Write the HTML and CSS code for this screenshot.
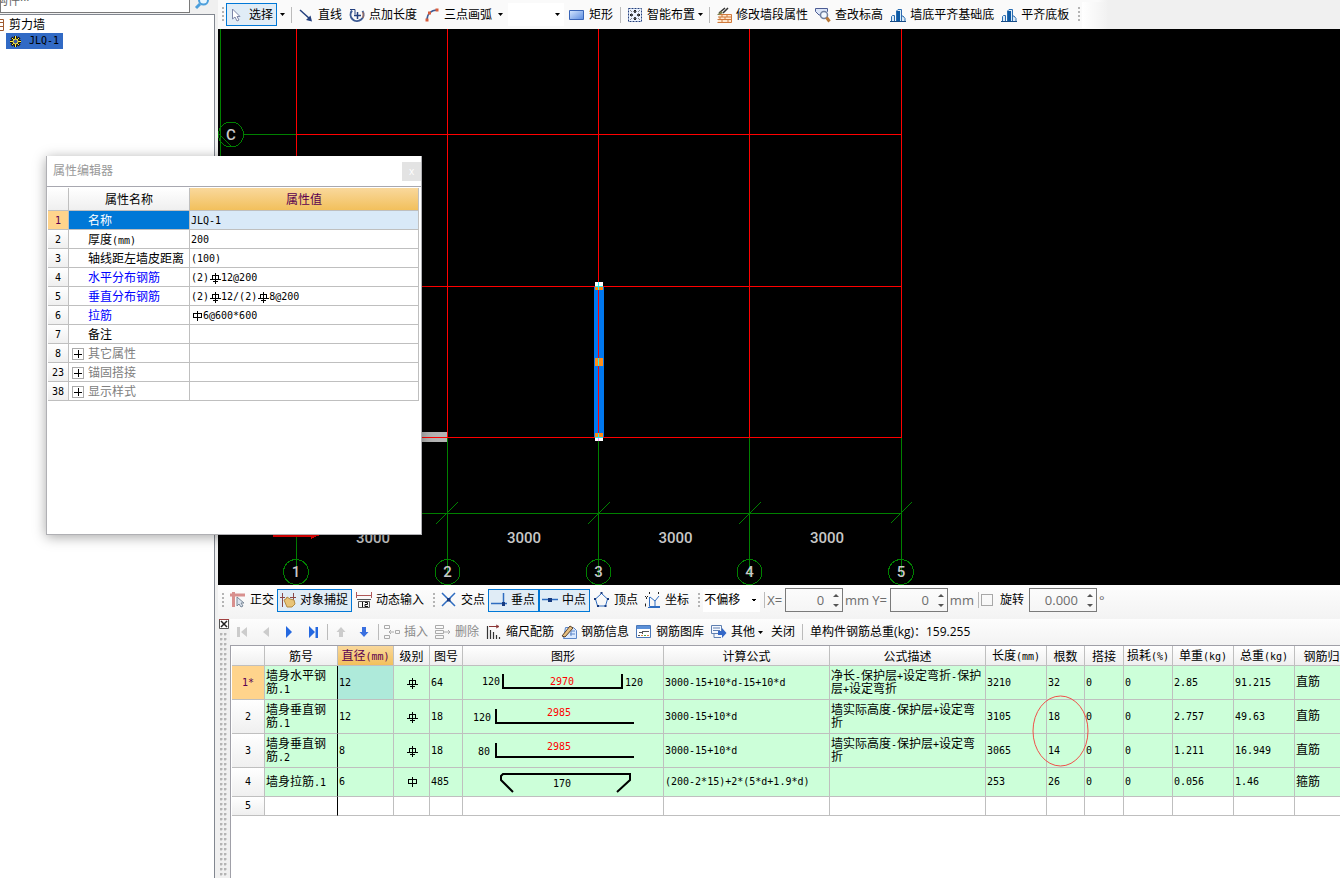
FILE: index.html
```html
<!DOCTYPE html>
<html lang="zh-CN">
<head>
<meta charset="utf-8">
<title>剪力墙</title>
<link rel="stylesheet" href="styles.css">
</head>
<body>
<svg width="0" height="0" class="defs" aria-hidden="true">
  <symbol id="rebar3" viewBox="0 0 12 12"><path d="M3.500 7.500v-4h6v4M1 7.500h11M4 9.500h5M6.500 1v11" fill="none" stroke="currentColor" shape-rendering="crispEdges"/></symbol>
  <symbol id="rebar1" viewBox="0 0 12 12"><path d="M2.500 3.500h8v4h-8zM6.500 1v10" fill="none" stroke="currentColor" shape-rendering="crispEdges"/></symbol>
  <symbol id="caret" viewBox="0 0 5 3"><path d="M0 0h5L2.500 3z" fill="currentColor"/></symbol>
  <symbol id="align" viewBox="0 0 16 16"><path d="M1.500 14.500v-5l1-1h2v6M6.500 14.500V4l1.500-1.500h3.500v12M11.500 9h1.500l2 2.500v3h-3.500z" fill="#dcebf8" stroke="#2a6db0"/><path d="M7 4h3v10H7z" fill="#0c5aa6"/><path d="M0 14.500h16" stroke="#174b86"/></symbol>
</svg>
<div class="app">
  <aside class="side">
    <div class="search">
      <input class="search-box" type="text" value="构件···" aria-label="搜索构件">
      <button class="search-btn" aria-label="搜索"><svg width="16" height="16" viewBox="0 0 16 16"><circle cx="9.500" cy="6" r="4.500" fill="#e8f6ff" stroke="#4d9fdc" stroke-width="2"/><path d="M6 10l-4 4" stroke="#4d9fdc" stroke-width="3"/></svg></button>
    </div>
    <ul class="tree">
      <li class="root"><svg width="5" height="14" viewBox="0 0 5 14"><path d="M0 1.500h3.500v11H0M0 4.500h3M0 8.500h3" stroke="#a05a30" fill="none"/></svg>剪力墙</li>
      <li class="leaf"><svg width="13" height="13" viewBox="0 0 13 13"><path d="M6.500 1v11M1 6.500h11M2.500 2.500l8 8M10.500 2.500l-8 8" stroke="#181818" stroke-width="3"/><path d="M6.500 1v11M1 6.500h11M3 3l7 7M10 3l-7 7" stroke="#ffee38"/><circle cx="6.500" cy="6.500" r="2.500" fill="#3a5aa0" stroke="#ffee38"/></svg><span class="m">JLQ-1</span></li>
    </ul>
  </aside>

  <main class="main">
    <div class="bar top">
      <span class="grip"></span>
      <button class="tool on"><svg width="16" height="16" viewBox="0 0 16 16"><path d="M3.500 2v10l2.500-2 2 4 2-1-2-3.500h3z" fill="#fff" stroke="#7d86a8"/></svg>选择</button>
      <button class="drop" aria-label="更多"><svg width="5" height="3"><use href="#caret"/></svg></button>
      <span class="sep"></span>
      <button class="tool"><svg width="16" height="16" viewBox="0 0 16 16"><path d="M2 3l10 9" stroke="#24407e" stroke-width="1.500"/><path d="M14 14.500l-6-1.500 4.500-4.500z" fill="#24407e"/></svg>直线</button>
      <button class="tool"><svg width="16" height="16" viewBox="0 0 16 16" fill="none"><path d="M3 3.500A6.500 6.500 0 1 0 13.500 4" stroke="#3d5b94" stroke-width="2"/><path d="M1 2.500h5v5" stroke="#24407e"/><path d="M5 8.500h7M8.500 5v7" stroke="#24407e" stroke-width="1.500"/><path d="M14 5v6" stroke="#c77b50"/></svg>点加长度</button>
      <button class="tool"><svg width="16" height="16" viewBox="0 0 16 16"><path d="M3 13C3 7 7 3 13 3" fill="none" stroke="#3d5b94" stroke-width="1.500"/><path d="M1.500 11.500h3v3h-3zM4 4.500h3v3H4zM11.500 1.500h3v3h-3z" fill="#d85c3c"/></svg>三点画弧</button>
      <button class="drop" aria-label="更多画弧方式"><svg width="5" height="3"><use href="#caret"/></svg></button>
      <button class="blank-combo" aria-label="选项"><svg width="5" height="3"><use href="#caret"/></svg></button>
      <button class="tool"><svg width="16" height="16" viewBox="0 0 16 16"><defs><linearGradient id="rg" x2="1" y2="1"><stop stop-color="#d6e8ff"/><stop offset="1" stop-color="#5a8be0"/></linearGradient></defs><path d="M.5 3.500h14v9H.5z" fill="url(#rg)" stroke="#3a66b8"/></svg>矩形</button>
      <span class="sep"></span>
      <button class="tool"><svg width="16" height="16" viewBox="0 0 16 16"><path d="M1.500 1.500h13v13h-13z" fill="#edf4ff" stroke="#24407e" stroke-dasharray="2 1"/><path d="M8 3v3M8 10v3M3 8h3M10 8h3" stroke="#111" stroke-width="1.500"/><path d="M6.500 4.500L8 3l1.500 1.500M6.500 11.500L8 13l1.500-1.500M4.500 6.500L3 8l1.500 1.500M11.500 6.500L13 8l-1.500 1.500M3.500 3.500l1 1M12.500 3.500l-1 1M3.500 12.500l1-1M12.500 12.500l-1-1" stroke="#222" fill="none"/></svg>智能布置</button>
      <button class="drop tight" aria-label="更多布置方式"><svg width="5" height="3"><use href="#caret"/></svg></button>
      <span class="sep"></span>
      <button class="tool"><svg width="16" height="16" viewBox="0 0 16 16"><path d="M3.500 7.500h12v8h-14z" fill="#ffe6cc"/><path d="M3 7.500h12.500v8H1.500M2 10h13M1.500 12.500H15M6 7.500V10M11 7.500V10M4 10v2.500M9 10v2.500M6 12.500v3M12 12.500v3" stroke="#d07a3c" fill="none"/><path d="M12 1L7 6M9 1L3 6" stroke="#333" stroke-width="1.500"/><path d="M1 8l4-4 2 2-4 2z" fill="#7a8050"/></svg>修改墙段属性</button>
      <button class="tool"><svg width="16" height="16" viewBox="0 0 16 16"><path d="M.5 1.500h12v3L9 8H4L.5 4.500z" fill="#dce6f8" stroke="#4c5c94"/><circle cx="9" cy="8" r="3.500" fill="#f2f8ff" stroke="#7080a0" stroke-width="1.500"/><path d="M11.500 10.500l3 4" stroke="#b87838" stroke-width="3"/></svg>查改标高</button>
      <button class="tool"><svg width="16" height="16"><use href="#align"/></svg>墙底平齐基础底</button>
      <button class="tool"><svg width="16" height="16"><use href="#align"/></svg>平齐底板</button>
      <span class="grip far"></span>
      <span class="tail"></span>
    </div>

    <div class="canvas">
      <svg class="drawing" viewBox="218 29 1122 556" width="1122" height="556" role="img" aria-label="轴网">
        <g class="green" fill="none">
          <path d="M220.500 29V500M244 134.500H296M422 513.500H901M296.500 437V576M447.500 437V576M598.500 437V576M749.500 437V576M901.500 437V576"/>
          <path d="M436 524l22-22M588 524l22-22M739 524l22-22M891 523l21-21M219 134l12 12"/>
          <circle cx="231" cy="134.500" r="12.500"/><circle cx="296" cy="572" r="12.500"/><circle cx="447.500" cy="572" r="12.500"/><circle cx="598.500" cy="572" r="12.500"/><circle cx="749.500" cy="572" r="12.500"/><circle cx="901" cy="572" r="12.500"/>
        </g>
        <path d="M422 432h25v10h-25z" fill="#b4b4b4"/>
        <path d="M594 286h10v152h-10z" fill="#0078f0"/>
        <path class="red" d="M296.500 29V437M447.500 29V437M598.500 29V437M749.500 29V437M901.500 29V437M296 134.500H902M296 286.500H902M296 437.500H902"/>
        <path d="M595 282h8v5h-8zM595 437h8v4h-8z" fill="#fff"/>
        <path d="M595 287h8v3h-8zM595 358h8v8h-8zM595 433h8v4h-8z" fill="#ff8c18"/>
        <path d="M598.500 282v8M598.500 358v8M598.500 433v5M595 286.500h8M595 437.500h8" stroke="#20f0f0"/>
        <path d="M598.500 438v3" stroke="#ff80ff"/>
        <path d="M273 534h49l-11 5v-2h-38z" fill="#f00"/>
        <g class="label">
          <text x="373" y="543">3000</text><text x="524" y="543">3000</text><text x="675.500" y="543">3000</text><text x="827" y="543">3000</text>
          <text x="231" y="140">C</text><text x="296" y="577">1</text><text x="447.500" y="577">2</text><text x="598.500" y="577">3</text><text x="749.500" y="577">4</text><text x="901" y="577">5</text>
        </g>
      </svg>
    </div>

    <div class="bar snap">
      <span class="grip"></span>
      <button class="tool"><svg width="16" height="16" viewBox="0 0 16 16"><path d="M0 3h15M3.500 0v15" stroke="#d8908e" stroke-width="3"/><path d="M7 5v9l2-2 2 3 2-1-2-3h3z" fill="#dbe3ee" stroke="#7a8898"/></svg>正交</button>
      <button class="tool on"><svg width="16" height="16" viewBox="0 0 16 16"><path d="M2.500 1v14M13.500 1v8M0 5.500h5M10 5.500h6" stroke="#8a4848"/><path d="M4 8l2-1 1-2 3 2 4 1 1 4-3 3H7z" fill="#e8c478" stroke="#b48a42"/></svg>对象捕捉</button>
      <button class="tool"><svg width="16" height="16" viewBox="0 0 16 16" fill="none"><path d="M.5 0v6M15.500 0v6M0 3.500h16" stroke="#b05858"/><path d="M1 7.500h14M2.500 9.500h11v6h-11z" stroke="#555"/><path d="M6.500 10v5M9 10.500h2.500v2H9v2h3" stroke="#111"/></svg>动态输入</button>
      <span class="grip mid"></span>
      <button class="tool"><svg width="16" height="16" viewBox="0 0 16 16"><path d="M1 1l13 13M14 1L1 14" stroke="#2e6cc0" stroke-width="1.500"/><path d="M6 6h3.500v3.500H6z" fill="#173a80"/></svg>交点</button>
      <button class="tool on"><svg width="16" height="16" viewBox="0 0 16 16"><path d="M12.500 1v11M0 11.500h16" stroke="#2e6cc0" stroke-width="1.500"/><path d="M11 10h3v4h-3z" fill="#173a80"/></svg>垂点</button>
      <button class="tool on"><svg width="16" height="16" viewBox="0 0 16 16"><path d="M0 7.500h16" stroke="#2e6cc0" stroke-width="1.500"/><path d="M6 6h4v4H6z" fill="#173a80"/></svg>中点</button>
      <button class="tool"><svg width="16" height="16" viewBox="0 0 16 16"><path d="M7.500 1.500L13.500 7 11.500 14H3.500L1.500 7z" fill="none" stroke="#2e6cc0"/><path d="M6.500 0h2v2h-2zM0 6h2v2H0zM13 6h2v2h-2zM3 13h2v2H3zM10.500 13h2v2h-2z" fill="#173a80"/></svg>顶点</button>
      <button class="tool"><svg width="16" height="16" viewBox="0 0 16 16" fill="none"><path d="M4.500 5v9.500H15M3 15.500h12" stroke="#2e6cc0"/><path d="M5 5l5 4 4-5M10 9v5" stroke="#2e6cc0"/><path d="M4.500 0v2M13.500 0v2M0 4l1.500 1.500L3 4M1.500 5.500V7M.5 11.500v3" stroke="#222"/></svg>坐标</button>
      <span class="grip mid"></span>
      <select class="combo" aria-label="偏移方式"><option>不偏移</option></select>
      <span class="sep"></span>
      <label for="ox">X=</label><span class="spin"><input id="ox" type="text" value="0"><i class="arrows"></i></span><span class="unit">mm</span>
      <label for="oy" class="second">Y=</label><span class="spin"><input id="oy" type="text" value="0"><i class="arrows"></i></span><span class="unit">mm</span>
      <span class="sep"></span>
      <input class="check" type="checkbox" id="rot"><label for="rot" class="rotate">旋转</label>
      <span class="spin wide"><input type="text" value="0.000" aria-label="旋转角度"><i class="arrows"></i></span><span class="unit">°</span>
    </div>

    <section class="panel">
      <div class="dock"><button class="dock-close" aria-label="关闭面板"><svg width="10" height="10" viewBox="0 0 10 10"><path d="M.5.500h9v9h-9z" fill="#fff" stroke="#555"/><path d="M0 .500h10" stroke="#a04040"/><path d="M2 2l6 6M8 2L2 8" stroke="#222" stroke-width="1.500"/></svg></button></div>
      <div class="panel-body">
        <div class="bar rebar">
          <button class="nav" aria-label="第一条"><svg width="12" height="14" viewBox="0 0 12 14"><path d="M1 2h3v10H1zM11 2v10L5 7z" fill="#ccc"/></svg></button>
          <button class="nav" aria-label="上一条"><svg width="12" height="14" viewBox="0 0 12 14"><path d="M9 2v10L3 7z" fill="#ccc"/></svg></button>
          <button class="nav" aria-label="下一条"><svg width="12" height="14" viewBox="0 0 12 14"><path d="M2 1v12l6-6z" fill="#2468e0"/></svg></button>
          <button class="nav" aria-label="最后一条"><svg width="12" height="14" viewBox="0 0 12 14"><path d="M1 1v12l6-6zM7.500 2h2.500v11H7.500z" fill="#2468e0"/></svg></button>
          <span class="sep"></span>
          <button class="nav" aria-label="上移"><svg width="12" height="14" viewBox="0 0 12 14"><path d="M6 2l4.500 5H8v5H4V7H1.500z" fill="#ccc"/></svg></button>
          <button class="nav" aria-label="下移"><svg width="12" height="14" viewBox="0 0 12 14"><path d="M5 12L.5 7H3V2h4v5h2.500z" fill="#3a70e0"/></svg></button>
          <span class="sep"></span>
          <button class="tool off"><svg width="16" height="16" viewBox="0 0 16 16" fill="none"><path d="M.5 1.500h5v3h-5zM.5 11.500h5v3h-5zM11.500 6.500h4v3h-4zM10 8H5M7 6L5 8l2 2" stroke="#aaa"/></svg>插入</button>
          <button class="tool off"><svg width="16" height="16" viewBox="0 0 16 16" fill="none"><path d="M.5 1.500h8v3h-8zM.5 6.500h8v3h-8zM.5 11.500h8v3h-8zM9 8h6M13 6l2 2-2 2" stroke="#aaa"/></svg>删除</button>
          <button class="tool"><svg width="16" height="16" viewBox="0 0 16 16"><path d="M1.500 2v13M4.500 6v9M7.500 8v7M10.500 11v4M13.500 13v2" stroke="#333" stroke-width="1.200"/><path d="M3 2.500h9M10 1l3 1.500L10 4" stroke="#8a3535" fill="none"/></svg>缩尺配筋</button>
          <button class="tool"><svg width="16" height="16" viewBox="0 0 16 16"><path d="M4.500 3.500h8l3 3v8h-13z" fill="#dbeaff" stroke="#5c86c8"/><path d="M10 7h4M9 10h5M10 7v5" stroke="#5c86c8"/><path d="M1 12l8-10 3 2-8 9z" fill="#e8c080" stroke="#584028"/></svg>钢筋信息</button>
          <button class="tool"><svg width="16" height="16" viewBox="0 0 16 16"><path d="M.5 1.500h14v12H.5z" fill="#fff" stroke="#4a78b8"/><path d="M1 2h13v3H1z" fill="#5b90d8"/><path d="M3 8.500h3M6.500 7v3M7 7.500h6M2 11.500h2" stroke="#555"/><path d="M5 11.500h2M11 11.500h2" stroke="#d84"/><path d="M8 11.500h2" stroke="#4a4"/></svg>钢筋图库</button>
          <button class="tool"><svg width="16" height="16" viewBox="0 0 16 16"><path d="M.5 1.500h10v8H.5zM3 10v3.500h7" fill="#f4f8ff" stroke="#6080b0"/><path d="M2 4h7M2 6.500h7" stroke="#6080b0"/><path d="M7 7h4V4l4.500 5L11 14v-3H7z" fill="#3468c8"/></svg>其他</button>
          <button class="drop tight" aria-label="其他选项"><svg width="5" height="3"><use href="#caret"/></svg></button>
          <button class="tool bare">关闭</button>
          <span class="sep"></span>
          <span class="total">单构件钢筋总重(kg)：159.255</span>
        </div>
        <div class="grid-wrap">
          <table class="grid bars">
            <colgroup><col class="w33"><col class="w73"><col class="w56"><col class="w36"><col class="w33"><col class="w201"><col class="w166"><col class="w156"><col class="w61"><col class="w38"><col class="w39"><col class="w49"><col class="w61"><col class="w61"><col class="w66"></colgroup>
            <thead><tr><th></th><th class="frozen">筋号</th><th class="hot">直径<span class="m">(mm)</span></th><th>级别</th><th>图号</th><th>图形</th><th>计算公式</th><th>公式描述</th><th>长度<span class="m">(mm)</span></th><th>根数</th><th>搭接</th><th>损耗<span class="m">(%)</span></th><th>单重<span class="m">(kg)</span></th><th>总重<span class="m">(kg)</span></th><th>钢筋归类</th></tr></thead>
            <tbody class="m">
              <tr class="tall"><th class="hot-row">1*</th><td class="frozen"><b>墙身水平钢筋</b>.1</td><td class="cur">12</td><td class="mid"><svg width="12" height="12"><use href="#rebar3"/></svg></td><td>64</td>
                <td class="pic"><svg width="200" height="33"><path class="bar-line" d="M40 8v14h119V8"/><text x="19" y="19">120</text><text class="dim" x="87" y="19">2970</text><text x="162" y="20">120</text></svg></td>
                <td>3000-15+10*d-15+10*d</td><td><b>净长</b>-<b>保护层</b>+<b>设定弯折</b>-<b>保护层</b>+<b>设定弯折</b></td><td>3210</td><td>32</td><td>0</td><td>0</td><td>2.85</td><td>91.215</td><td><b>直筋</b></td></tr>
              <tr class="tall"><th>2</th><td class="frozen"><b>墙身垂直钢筋</b>.1</td><td>12</td><td class="mid"><svg width="12" height="12"><use href="#rebar3"/></svg></td><td>18</td>
                <td class="pic"><svg width="200" height="33"><path class="bar-line" d="M33 9v14h138"/><text x="10" y="21">120</text><text class="dim" x="84" y="16">2985</text></svg></td>
                <td>3000-15+10*d</td><td><b>墙实际高度</b>-<b>保护层</b>+<b>设定弯折</b></td><td>3105</td><td>18</td><td>0</td><td>0</td><td>2.757</td><td>49.63</td><td><b>直筋</b></td></tr>
              <tr class="tall"><th>3</th><td class="frozen"><b>墙身垂直钢筋</b>.2</td><td>8</td><td class="mid"><svg width="12" height="12"><use href="#rebar3"/></svg></td><td>18</td>
                <td class="pic"><svg width="200" height="33"><path class="bar-line" d="M33 9v14h138"/><text x="15" y="21">80</text><text class="dim" x="84" y="16">2985</text></svg></td>
                <td>3000-15+10*d</td><td><b>墙实际高度</b>-<b>保护层</b>+<b>设定弯折</b></td><td>3065</td><td>14</td><td>0</td><td>0</td><td>1.211</td><td>16.949</td><td><b>直筋</b></td></tr>
              <tr class="medium"><th>4</th><td class="frozen"><b>墙身拉筋</b>.1</td><td>6</td><td class="mid"><svg width="12" height="12"><use href="#rebar1"/></svg></td><td>485</td>
                <td class="pic"><svg width="200" height="28"><path class="bar-line" d="M50 24L38 12v-4l2-2h127v6l-13 12"/><text x="90" y="19">170</text></svg></td>
                <td>(200-2*15)+2*(5*d+1.9*d)</td><td></td><td>253</td><td>26</td><td>0</td><td>0</td><td>0.056</td><td>1.46</td><td><b>箍筋</b></td></tr>
              <tr class="last"><th>5</th><td class="frozen"></td><td></td><td></td><td></td><td></td><td></td><td></td><td></td><td></td><td></td><td></td><td></td><td></td><td></td></tr>
            </tbody>
          </table>
          <svg class="mark" width="57" height="72" viewBox="0 0 57 72" aria-hidden="true"><ellipse cx="28.500" cy="36" rx="27.500" ry="35" fill="none" stroke="#f0504a"/></svg>
        </div>
      </div>
    </section>
  </main>

  <section class="dialog" role="dialog" aria-label="属性编辑器">
    <header class="dialog-head"><h1>属性编辑器</h1><button class="dialog-close" aria-label="关闭">x</button></header>
    <div class="dialog-body">
      <table class="grid props">
        <colgroup><col class="w21"><col class="w121"><col class="w229"></colgroup>
        <thead><tr><th></th><th>属性名称</th><th class="hot">属性值</th></tr></thead>
        <tbody>
          <tr class="sel"><th class="hot-row m">1</th><td>名称</td><td class="m">JLQ-1</td></tr>
          <tr><th class="m">2</th><td>厚度<span class="m">(mm)</span></td><td class="m">200</td></tr>
          <tr><th class="m">3</th><td>轴线距左墙皮距离</td><td class="m">(100)</td></tr>
          <tr class="blue"><th class="m">4</th><td>水平分布钢筋</td><td class="m">(2)<svg width="12" height="12"><use href="#rebar3"/></svg>12@200</td></tr>
          <tr class="blue"><th class="m">5</th><td>垂直分布钢筋</td><td class="m">(2)<svg width="12" height="12"><use href="#rebar3"/></svg>12/(2)<svg width="12" height="12"><use href="#rebar3"/></svg>8@200</td></tr>
          <tr class="blue"><th class="m">6</th><td>拉筋</td><td class="m"><svg width="12" height="12"><use href="#rebar1"/></svg>6@600*600</td></tr>
          <tr><th class="m">7</th><td>备注</td><td></td></tr>
          <tr class="group"><th class="m">8</th><td><button class="plus" aria-label="展开其它属性"></button>其它属性</td><td></td></tr>
          <tr class="group"><th class="m">23</th><td><button class="plus" aria-label="展开锚固搭接"></button>锚固搭接</td><td></td></tr>
          <tr class="group"><th class="m">38</th><td><button class="plus" aria-label="展开显示样式"></button>显示样式</td><td></td></tr>
        </tbody>
      </table>
    </div>
  </section>
</div>
</body>
</html>
```
FILE: styles.css
```css
* { box-sizing: border-box; }
body {
  margin: 0;
  font: 12px/16px "Open Sans", "Noto Sans CJK SC", sans-serif;
  color: #000;
  background: #f0f0f0;
}
button, input, select { font: inherit; color: inherit; margin: 0; padding: 0; border: 0; background: none; border-radius: 0; }
svg { flex: none; }
.defs { position: absolute; }
.m { font-family: "DejaVu Sans Mono", "Noto Sans CJK SC", monospace; font-size: 10px; }
b { font-weight: 400; font-size: 12px; line-height: 10px; font-family: "Noto Sans CJK SC", sans-serif; }

.app { display: flex; height: 100vh; overflow: hidden; position: relative; }

/* component tree */
.side { width: 218px; flex: none; display: flex; flex-direction: column; padding-right: 3px; }
.search { display: flex; height: 14px; }
.search-box { width: 190px; height: 27px; margin-top: -14px; border: 1px solid #7a7a7a; background: #fff; color: #666; text-indent: -5px; }
.search-btn { height: 14px; margin-left: 4px; display: flex; align-items: center; margin-top: -5px; }
.tree { flex: 1; margin: 0; padding: 2px 0 0; list-style: none; background: #fff; border-top: 1px solid #828790; border-right: 1px solid #828790; }
.tree li { display: flex; align-items: center; height: 16px; }
.root { gap: 4px; }
.leaf { margin-left: 6px; width: 57px; padding-left: 3px; gap: 7px; background: #316ac5; }

/* toolbars */
.main { flex: 1; min-width: 0; display: flex; flex-direction: column; }
.bar { display: flex; align-items: center; flex: none; white-space: nowrap; background: linear-gradient(#fdfdfd, #f3f3f3); }
.top { height: 29px; padding-left: 3px; background: linear-gradient(90deg, #fafafa 880px, #f0f0f0 890px); }
.tool { display: flex; align-items: center; gap: 4px; height: 23px; padding: 0 3px 0 4px; flex: none; }
.tool.on { background: #e0ecf6; border: 1px solid #0078d7; padding: 0 3px 0 2px; }
.tool.off { color: #8a8a8a; }
.tool.bare { padding: 0 6px; }
.drop { display: flex; align-items: center; justify-content: center; width: 10px; height: 23px; flex: none; }
.drop.tight { margin-left: -3px; }
.sep { width: 1px; height: 16px; background: #bbb; margin: 0 2px 0 4px; flex: none; }
.grip { width: 2px; height: 15px; margin: 0 2px 0 1px; flex: none; background: repeating-linear-gradient(#b4b4b4 0 2px, transparent 2px 4px); }
.grip.mid { margin: 0 2px 0 6px; }
.grip.far { margin-left: 6px; }
.tail { width: 24px; height: 26px; background: linear-gradient(90deg, #fff, #f2f2f2); }
.blank-combo { width: 56px; height: 23px; margin: 0 1px 0 3px; background: #fff; display: flex; align-items: center; justify-content: flex-end; padding-right: 4px; flex: none; }

/* drawing area */
.canvas { flex: 1; min-height: 0; background: #000; overflow: hidden; }
.drawing { display: block; shape-rendering: crispEdges; }
.green { stroke: #008000; }
.red { stroke: #f00; }
.label { font: 500 15px Roboto, sans-serif; fill: #c8c8c8; text-anchor: middle; }

/* snap bar */
.snap { height: 34px; padding: 0 0 4px 3px; }
.combo { width: 57px; height: 23px; margin-left: 1px; padding-left: 1px; appearance: none; flex: none;
  background: conic-gradient(from -45deg at 50% 100%, #000 90deg, transparent 0) right 3px center / 6px 3px no-repeat, #fff; }
.snap label, .unit { color: #6d6d6d; font-size: 13px; flex: none; }
.snap .second { margin-left: 3px; }
.snap .rotate { color: #000; font-size: 12px; margin: 0 5px 0 7px; }
.unit { margin-left: 2px; }
.spin { display: flex; align-items: center; width: 58px; height: 24px; margin-left: 3px; border: 1px solid #7a7a7a; padding-right: 3px; flex: none; }
.spin.wide { width: 68px; margin-left: 0; }
.spin input { flex: 1; min-width: 0; width: 0; text-align: right; padding-right: 9px; color: #6d6d6d; font-size: 13px; }
.arrows { display: flex; flex-direction: column; gap: 7px; }
.arrows::before, .arrows::after { content: ""; border: 3px solid transparent; }
.arrows::before { border-top: 0; border-bottom-color: #555; }
.arrows::after { border-bottom: 0; border-top-color: #555; }
.check { appearance: none; width: 12px; height: 12px; border: 1px solid #a8a8a8; flex: none; }

/* rebar panel */
.panel { display: flex; min-height: 259px; flex: none; }
.dock { width: 12px; flex: none; padding: 0 1px; display: flex; flex-direction: column; }
.dock::after { content: ""; flex: 1; width: 7px; margin-left: 1px; background: linear-gradient(#bbb, #bbb) 0 0 / 2px 2px, #f0f0f0;
  background: radial-gradient(circle at 1px 1px, #b4b4b4 1px, transparent 2px) 0 2px / 4px 5px; }
.dock-close { display: flex; height: 12px; }
.panel-body { flex: 1; min-width: 0; display: flex; flex-direction: column; }
.rebar { height: 26px; }
.nav { width: 24px; height: 23px; display: flex; align-items: center; justify-content: center; flex: none; }
.rebar .sep { margin: 0 1px; }
.total { margin-left: 6px; }
.grid-wrap { position: relative; flex: 1; overflow: hidden; background: #fff; border: 1px solid #a0a0a8; border-width: 1px 0 0 1px; }
.mark { position: absolute; left: 801px; top: 49px; }

/* tables */
.grid { border-collapse: separate; border-spacing: 0; table-layout: fixed; }
.grid th, .grid td { padding: 0 0 0 1px; border: 1px solid #bfbfbf; border-width: 0 1px 1px 0; text-align: left; font-weight: 400; line-height: 12px; overflow: hidden; }
.grid th { padding: 0; text-align: center; background: linear-gradient(#fff, #efefef); white-space: nowrap; }
.grid thead th { padding-top: 2px; }
.grid th.hot { color: #5a0050; background: linear-gradient(#f9d89c, #f2c05c); }
.grid th.hot-row { color: #5a0050; background: #ffd48c; }
.grid svg { vertical-align: middle; }
.bars { width: 1129px; margin-left: 1px; }
.bars thead tr { height: 20px; }
.bars td { background: #ccffd9; }
.bars .last td { background: #fff; }
.bars td.cur { background: #aeeada; }
.bars td.mid { text-align: center; padding: 0; }
.bars td.pic { padding: 0; }
.bars td.pic svg { display: block; }
.bars tbody .frozen { border-right-color: #000; }
.tall { height: 34px; }
.medium { height: 29px; }
.last { height: 19px; }
.bar-line { fill: none; stroke: #000; stroke-width: 2; }
.dim { fill: #f00; }
.w33 { width: 33px; } .w73 { width: 73px; } .w56 { width: 56px; } .w36 { width: 36px; }
.w201 { width: 201px; } .w166 { width: 166px; } .w156 { width: 156px; } .w61 { width: 61px; }
.w38 { width: 38px; } .w39 { width: 39px; } .w49 { width: 49px; } .w66 { width: 66px; }
.w21 { width: 21px; } .w121 { width: 121px; } .w229 { width: 229px; }

/* floating property editor */
.dialog { position: absolute; left: 46px; top: 156px; width: 376px; height: 379px; display: flex; flex-direction: column; background: #fff; border: 1px solid #b0b0b4; border-top: 0; box-shadow: 0 2px 12px rgba(0, 0, 0, .35); }
.dialog-head { display: flex; align-items: center; justify-content: space-between; height: 30px; padding-left: 6px; border-bottom: 1px solid #a8a8b0; box-sizing: content-box; }
.dialog-head h1 { margin: 0; font-size: 12px; font-weight: 400; color: #999; }
.dialog-close { width: 19px; height: 19px; background: #e3e3e3; color: #fff; font-size: 10px; line-height: 16px; }
.dialog-body { padding: 1px 0 0 1px; }
.props { width: 371px; }
.props thead tr { height: 23px; }
.props tr { height: 19px; }
.props tbody th, .props tbody td { padding-top: 2px; }
.props td:nth-child(2) { padding-left: 19px; white-space: nowrap; }
.sel td:nth-child(2) { background: #0078d7; color: #fff; }
.sel td:nth-child(3) { background: #d9e9f8; }
.blue td:nth-child(2) { color: #00f; }
.group td:nth-child(2) { color: #808080; padding-left: 3px; }
.plus { width: 12px; height: 12px; margin-right: 4px; vertical-align: middle; border: 1px solid #aaa;
  background: linear-gradient(#000, #000) center / 8px 1px no-repeat, linear-gradient(#000, #000) center / 1px 8px no-repeat; }
```
